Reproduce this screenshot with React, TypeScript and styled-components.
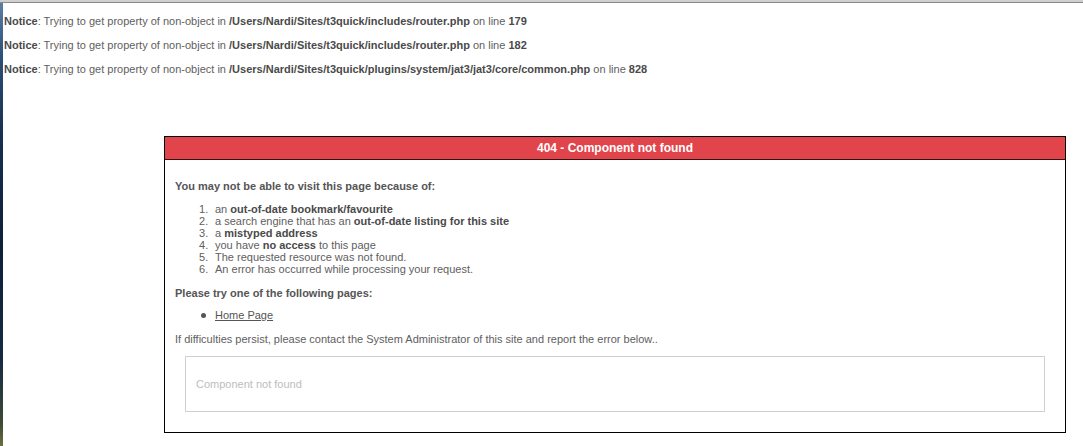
import React from "react";
import styled, { createGlobalStyle } from "styled-components";

const Global = createGlobalStyle`
  html, body { margin: 0; padding: 0; background: #fff; }
  body { font-family: "Liberation Sans", Arial, Helvetica, sans-serif; font-size: 11px; color: #555; }
`;

const Frame = styled.div`
  display: flex;
  flex-direction: column;
  width: 1083px;
  height: 446px;
  overflow: hidden;
`;

const TopBar = styled.div`
  height: 2px;
  background: #cfcfcf;
  border-bottom: 1px solid #8a8a8a;
  flex: none;
`;

const Body = styled.div`
  display: flex;
  flex: 1;
`;

const DesktopStrip = styled.div`
  width: 3px;
  flex: none;
  background: linear-gradient(
    to bottom,
    #5a7fa6 0%,
    #2e4f78 12%,
    #17304f 30%,
    #0e1f3a 55%,
    #142a44 80%,
    #3e4a36 95%,
    #6a7040 100%
  );
`;

const Main = styled.div`
  flex: 1;
  padding-top: 12px;
  padding-left: 1px;
`;

const Notices = styled.div`
  display: flex;
  flex-direction: column;
  gap: 11px;
`;

const Notice = styled.div`
  line-height: 13px;
  color: #606060;
  white-space: nowrap;
  b { color: #4a4a4a; }
`;

const ErrorPanel = styled.div`
  margin: 60px 0 0 160px;
  width: 900px;
  border: 1px solid #000;
  background: #fff;
`;

const PanelHeader = styled.div`
  height: 22px;
  line-height: 22px;
  background: #e2444c;
  border-bottom: 1px solid #3a1010;
  color: #fff;
  font-weight: bold;
  font-size: 12px;
  text-align: center;
`;

const PanelContent = styled.div`
  padding: 19px 10px 20px 10px;
`;

const Lead = styled.div<{ $gap?: number }>`
  font-weight: bold;
  line-height: 14px;
  color: #555;
  margin-top: ${(p) => p.$gap ?? 0}px;
`;

const NumList = styled.ol`
  margin: 10px 0 0 0;
  padding-left: 24px;
  list-style: none;
  counter-reset: item;
  li {
    line-height: 12px;
    color: #606060;
    counter-increment: item;
  }
  li::before {
    content: counter(item) ".";
    display: inline-block;
    width: 16px;
  }
  b { color: #4a4a4a; }
`;

const BulletList = styled.ul`
  margin: 9px 0 0 0;
  padding-left: 26px;
  list-style: none;
  li {
    line-height: 12px;
    display: flex;
    align-items: center;
  }
  li::before {
    content: "";
    width: 5px;
    height: 5px;
    border-radius: 50%;
    background: #555;
    margin-right: 9px;
    flex: none;
  }
  a { color: #555; text-decoration: underline; }
`;

const Para = styled.div`
  margin-top: 11px;
  line-height: 14px;
  color: #606060;
`;

const ErrorBox = styled.div`
  margin: 10px 10px 0 10px;
  height: 54px;
  border: 1px solid #cfcfcf;
  display: flex;
  align-items: center;
  padding-left: 10px;
  color: #bdbdbd;
`;

export default function App() {
  return (
    <Frame>
      <Global />
      <TopBar />
      <Body>
        <DesktopStrip />
        <Main>
          <Notices>
            <Notice>
              <b>Notice</b>: Trying to get property of non-object in{" "}
              <b>/Users/Nardi/Sites/t3quick/includes/router.php</b> on line <b>179</b>
            </Notice>
            <Notice>
              <b>Notice</b>: Trying to get property of non-object in{" "}
              <b>/Users/Nardi/Sites/t3quick/includes/router.php</b> on line <b>182</b>
            </Notice>
            <Notice>
              <b>Notice</b>: Trying to get property of non-object in{" "}
              <b>/Users/Nardi/Sites/t3quick/plugins/system/jat3/jat3/core/common.php</b> on line{" "}
              <b>828</b>
            </Notice>
          </Notices>
          <ErrorPanel>
            <PanelHeader>404 - Component not found</PanelHeader>
            <PanelContent>
              <Lead>You may not be able to visit this page because of:</Lead>
              <NumList>
                <li>
                  an <b>out-of-date bookmark/favourite</b>
                </li>
                <li>
                  a search engine that has an <b>out-of-date listing for this site</b>
                </li>
                <li>
                  a <b>mistyped address</b>
                </li>
                <li>
                  you have <b>no access</b> to this page
                </li>
                <li>The requested resource was not found.</li>
                <li>An error has occurred while processing your request.</li>
              </NumList>
              <Lead $gap={11}>Please try one of the following pages:</Lead>
              <BulletList>
                <li>
                  <a href="#">Home Page</a>
                </li>
              </BulletList>
              <Para>
                If difficulties persist, please contact the System Administrator of this site and report the error below..
              </Para>
              <ErrorBox>Component not found</ErrorBox>
            </PanelContent>
          </ErrorPanel>
        </Main>
      </Body>
    </Frame>
  );
}
